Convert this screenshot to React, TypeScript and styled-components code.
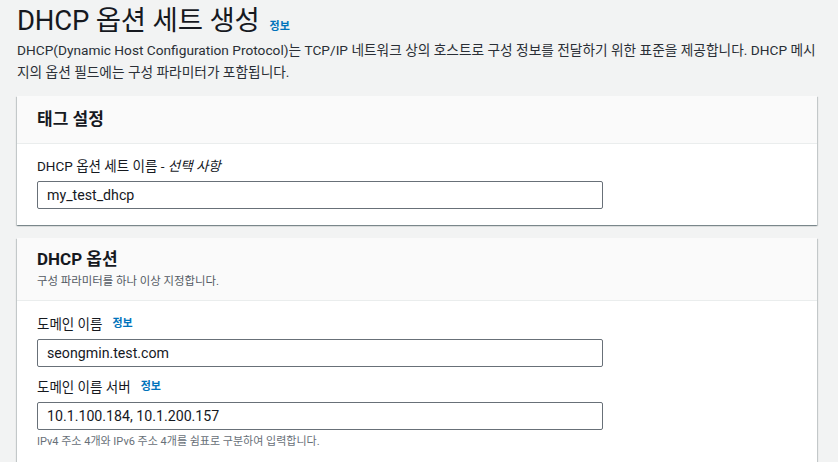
import React from 'react';
import styled, { createGlobalStyle } from 'styled-components';

const GlobalStyle = createGlobalStyle`
  html, body {
    margin: 0;
    padding: 0;
    background: #f2f3f3;
  }
  body {
    font-family: "Roboto", "Noto Sans CJK KR", sans-serif;
    color: #16191f;
  }
`;

const Page = styled.main`
  width: 800px;
  padding: 3px 0 0 17px;
`;

const TitleRow = styled.div`
  display: flex;
  align-items: baseline;
  gap: 10px;
`;

const Title = styled.h1`
  margin: 0;
  font-size: 27.5px;
  font-weight: 400;
  line-height: 36px;
  letter-spacing: -0.2px;
`;

const InfoLink = styled.a<{ $size?: number }>`
  font-size: ${(p) => p.$size ?? 11}px;
  font-weight: 700;
  color: #0073bb;
  text-decoration: none;
`;

const Description = styled.p`
  margin: 0 0 13px;
  font-size: 13.7px;
  line-height: 22px;
  color: #2a2f36;
  width: 800px;
  word-break: break-all;
`;

const Card = styled.section`
  width: 800px;
  background: #fff;
  margin-bottom: 13px;
  box-shadow: 0 1px 1px 0 rgba(0, 28, 36, 0.3), 1px 1px 1px 0 rgba(0, 28, 36, 0.15),
    -1px 1px 1px 0 rgba(0, 28, 36, 0.15);
`;

const CardHeader = styled.header<{ $pad: string }>`
  background: #fafafa;
  border-bottom: 1px solid #eaeded;
  padding: ${(p) => p.$pad};
`;

const CardTitle = styled.h2`
  margin: 0;
  font-size: 17px;
  font-weight: 700;
  line-height: 22px;
`;

const CardSubtitle = styled.p`
  margin: 3px 0 0;
  font-size: 11.4px;
  line-height: 16px;
  color: #545b64;
`;

const CardBody = styled.div<{ $pad: string }>`
  padding: ${(p) => p.$pad};
  display: flex;
  flex-direction: column;
`;

const Field = styled.div`
  display: flex;
  flex-direction: column;
  margin-bottom: 10px;
`;

const Label = styled.label`
  display: flex;
  align-items: center;
  gap: 10px;
  font-size: 13.5px;
  line-height: 20px;
  margin-bottom: 5px;
  em {
    font-style: italic;
  }
`;

const Input = styled.input`
  box-sizing: border-box;
  width: 566px;
  height: 28px;
  border: 1px solid #687078;
  border-radius: 2px;
  padding: 0 9px;
  font-family: "Roboto", "Noto Sans CJK KR", sans-serif;
  font-size: 14.2px;
  color: #16191f;
  background: #fff;
  outline: none;
`;

const Hint = styled.div`
  font-size: 11px;
  line-height: 16px;
  color: #687078;
  margin-top: 4px;
`;

export default function App() {
  return (
    <>
      <GlobalStyle />
      <Page>
        <TitleRow>
          <Title>DHCP 옵션 세트 생성</Title>
          <InfoLink href="#">정보</InfoLink>
        </TitleRow>
        <Description>
          DHCP(Dynamic Host Configuration Protocol)는 TCP/IP 네트워크 상의 호스트로 구성 정보를 전달하기 위한 표준을
          제공합니다. DHCP 메시지의 옵션 필드에는 구성 파라미터가 포함됩니다.
        </Description>

        <Card>
          <CardHeader $pad="12px 20px 13px">
            <CardTitle>태그 설정</CardTitle>
          </CardHeader>
          <CardBody $pad="12px 20px 6px">
            <Field>
              <Label>
                <span>
                  DHCP 옵션 세트 이름 - <em>선택 사항</em>
                </span>
              </Label>
              <Input defaultValue="my_test_dhcp" />
            </Field>
          </CardBody>
        </Card>

        <Card>
          <CardHeader $pad="10px 20px 11px">
            <CardTitle>DHCP 옵션</CardTitle>
            <CardSubtitle>구성 파라미터를 하나 이상 지정합니다.</CardSubtitle>
          </CardHeader>
          <CardBody $pad="13px 20px 8px">
            <Field>
              <Label>
                도메인 이름 <InfoLink href="#">정보</InfoLink>
              </Label>
              <Input defaultValue="seongmin.test.com" />
            </Field>
            <Field>
              <Label>
                도메인 이름 서버 <InfoLink href="#">정보</InfoLink>
              </Label>
              <Input defaultValue="10.1.100.184, 10.1.200.157" />
              <Hint>IPv4 주소 4개와 IPv6 주소 4개를 쉼표로 구분하여 입력합니다.</Hint>
            </Field>
          </CardBody>
        </Card>
      </Page>
    </>
  );
}
